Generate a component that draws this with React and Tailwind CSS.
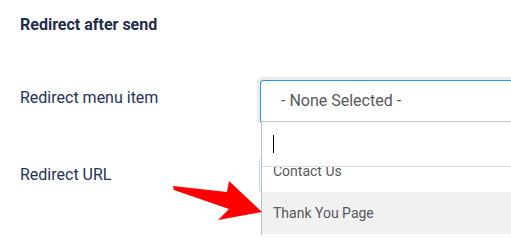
import React from 'react';

// red callout arrow pointing at the highlighted option
function Arrow() {
  return (
    <svg className="absolute left-0 top-0 pointer-events-none" width="511" height="235" viewBox="0 0 511 235">
      <polygon points="173,186 227,192 229,181 262,212 218,220 229,209 174,190" fill="#ff0000" />
    </svg>
  );
}

function App() {
  return (
    <div className="relative w-[511px] h-[235px] overflow-hidden bg-white font-['Roboto',sans-serif]">
      <div className="px-5 pt-[13px]">
        <h3 className="text-[16px] leading-6 font-bold text-[#1f2d4d]">Redirect after send</h3>
      </div>

      {/* Redirect menu item */}
      <div className="flex mt-[43px] h-[42px]">
        <label className="w-[260px] shrink-0 pl-5 pt-[6px] text-[16px] leading-6 text-[#22335b]">Redirect menu item</label>
        <div className="relative shrink-0">
          <div className="absolute -inset-[3px] rounded-[6px] bg-[#e9ebee]"></div>
          <div className="relative w-[280px] h-[42px] bg-white border border-[#2196f3] border-b-[#c4c4c4] rounded-t-[4px] pl-5 flex items-center text-[16px] text-[#55595c]">
            - None Selected -
          </div>
        </div>
      </div>

      {/* Redirect URL */}
      <div className="flex mt-[35px] h-[36px]">
        <label className="w-[259px] shrink-0 pl-5 pt-[6px] text-[16px] leading-6 text-[#22335b]">Redirect URL</label>
        <div className="w-[260px] shrink-0 h-[36px] border border-[#c7d2e2] rounded-[4px] bg-white"></div>
      </div>

      {/* open dropdown */}
      <div className="absolute left-[261px] top-[122px] w-[260px] h-[120px] bg-white border-l border-[#bdbdbd] overflow-hidden">
        <div className="h-[45px] border-b border-[#dcdcdc] flex items-center pl-[11px]">
          <div className="w-px h-[18px] bg-black"></div>
        </div>
        <div className="h-[70px] overflow-hidden">
          <div className="-mt-[17px]">
            <div className="h-[42px] flex items-center pl-[11px] text-[14px] text-[#55595c]">Contact Us</div>
            <div className="h-[42px] flex items-center pl-[11px] text-[14px] text-[#55595c] bg-[#f1f1f1]">Thank You Page</div>
          </div>
        </div>
      </div>

      <Arrow />
    </div>
  );
}

export default App;
